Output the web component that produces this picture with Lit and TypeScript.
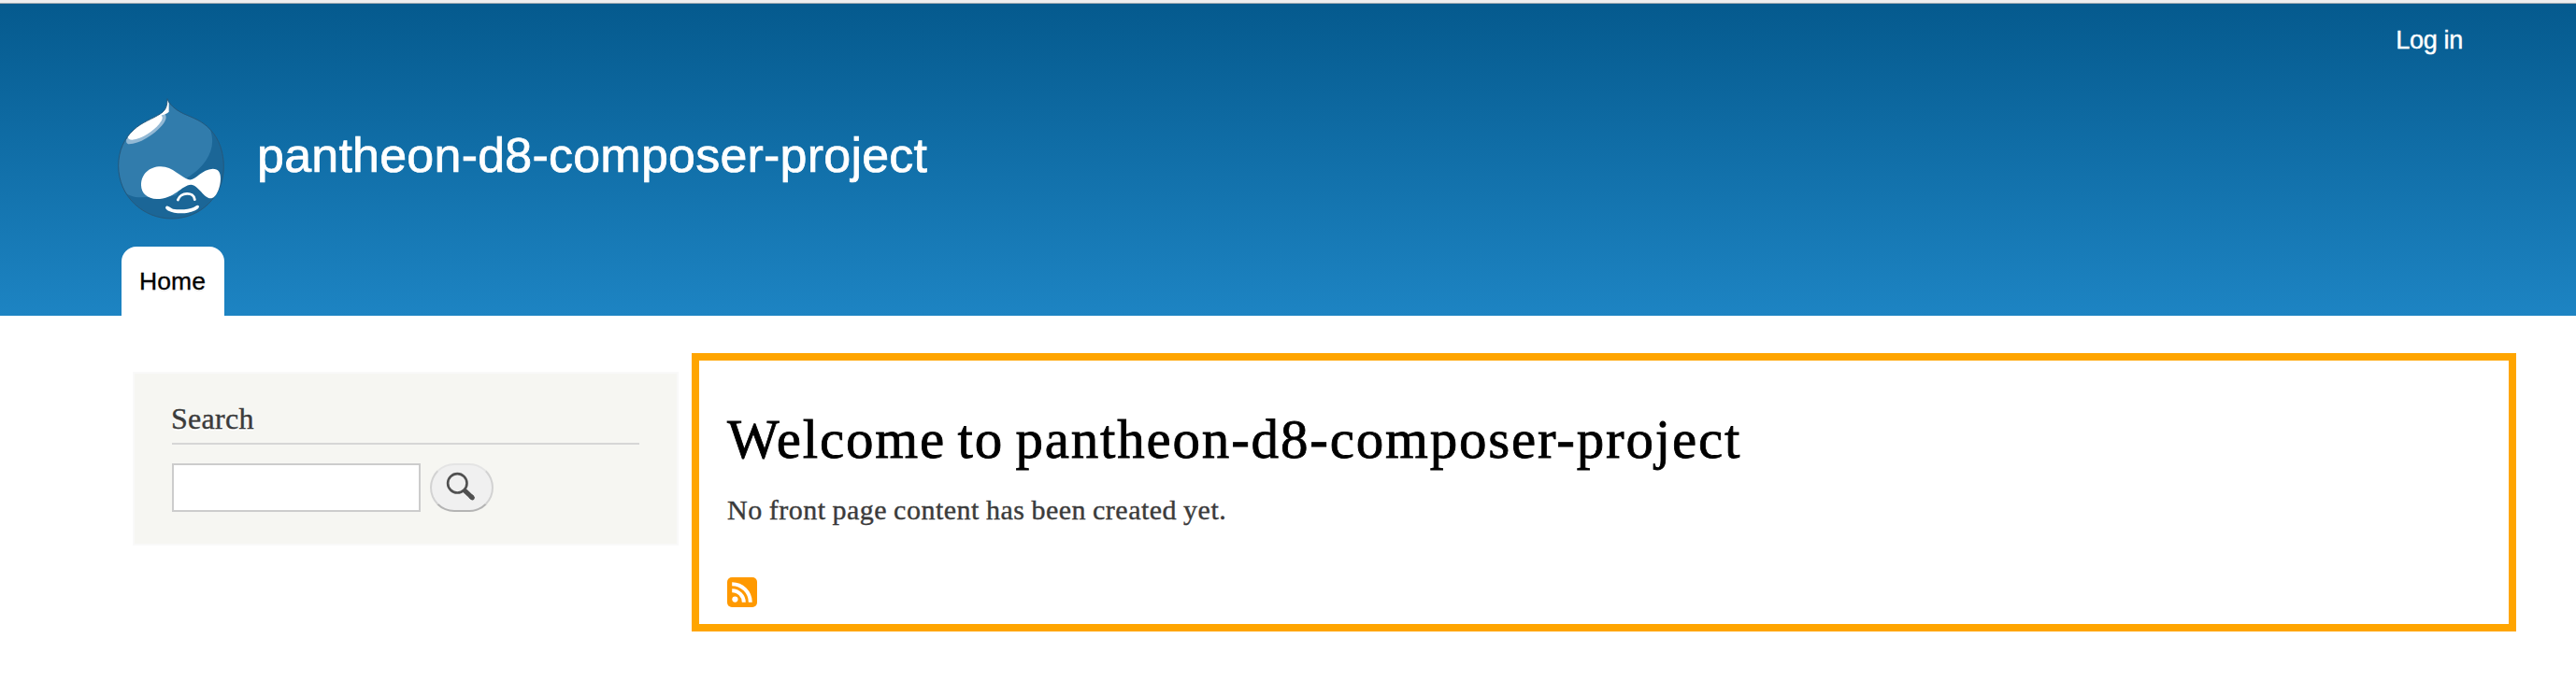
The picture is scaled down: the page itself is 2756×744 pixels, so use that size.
import { LitElement, html, css } from "lit";
import { customElement } from "lit/decorators.js";

@customElement("site-logo")
class SiteLogo extends LitElement {
  static styles = css`
    :host { display: block; width: 114px; height: 130px; }
    .drop { display: block; width: 114px; height: 130px; overflow: visible; }
  `;
  render() {
    return html`<svg class="drop" viewBox="48 47 342 390" aria-label="Home">
      <defs>
        <clipPath id="c"><path d="M207 49C213 66 231 84 259 97C290 111 318 119 345 148C374 179 388 222 388 268C388 364 312 434 221 434C128 434 50 362 50 264C50 216 69 176 99 149C127 123 158 115 187 96C203 85 207 70 207 49Z"/></clipPath>
      </defs>
      <g clip-path="url(#c)">
        <rect x="40" y="40" width="360" height="400" fill="#317cac"/>
        <path d="M345 148C357 184 352 216 330 249C314 272 291 291 270 303L235 360L125 366C101 367 84 359 68 349L50 440H400V180Z" fill="#1b6697"/>
        <path d="M199 97C207 107 202 120 190 135C164 166 116 195 84 195C76 195 74 188 76 180L90 160Z" fill="#93b9d5"/>
        <path d="M207 49C203 72 200 88 179 100C140 114 108 134 80 170C79 176 85 181 94 181C126 178 161 153 181 130C190 120 195 109 188 103C195 99 205 99 212 91V62Z" fill="#fff"/>
      </g>
      <path d="M207 49C213 66 231 84 259 97C290 111 318 119 345 148C374 179 388 222 388 268C388 364 312 434 221 434C128 434 50 362 50 264C50 216 69 176 99 149C127 123 158 115 187 96C203 85 207 70 207 49Z" fill="none" stroke="#24587c" stroke-width="3"/>
      <path d="M123 327C123 290 150 267 186 267C225 267 250 302 276 309C297 313 316 276 353 274C371 274 378 286 378 305C378 332 365 369 346 369C325 369 307 327 283 325C252 327 230 371 173 371C144 371 123 353 123 327Z" fill="#fff"/>
      <path d="M241 374C249 349 292 346 295 373" fill="none" stroke="#fff" stroke-width="8.5" stroke-linecap="round"/>
      <path d="M204 394C211 391 216 400 225 403C248 407 275 405 291 398C299 394 304 388 309 394C310 405 287 412 273 415C252 419 224 416 211 409C203 405 198 398 204 394Z" fill="#fff"/>
    </svg>`;
  }
}

@customElement("search-block")
class SearchBlock extends LitElement {
  static styles = css`
    :host { display: block; }
    .block {
      box-sizing: border-box; width: 584px; height: 186px; padding: 30px 40px 0;
      border: 2px solid #f9f9f9; background: #f6f6f2;
    }
    .title {
      box-sizing: border-box; margin: 0; height: 46px; border-bottom: 2px solid #d6d6d6;
      font: 400 32px/36px "Liberation Serif", serif; letter-spacing: 0.3px; color: #3b3b3b;
      text-indent: -1px; -webkit-text-stroke: 0.4px #3b3b3b; text-shadow: 0 2px 0 #fff;
    }
    .form { display: flex; gap: 10px; margin-top: 20px; }
    .field {
      box-sizing: border-box; width: 266px; height: 52px; margin: 0; padding: 4px;
      border: 2px solid #ccc; border-radius: 0; background: #fff; outline: none;
    }
    .go {
      box-sizing: border-box; width: 68px; height: 52px; margin: 0; padding: 0;
      display: flex; border: 2px solid #d2d2d2; border-top-color: #e4e4e4;
      border-bottom-color: #b4b4b4; border-radius: 26px; background: #f0f0f0;
    }
    .glass { display: block; width: 64px; height: 48px; }
  `;
  render() {
    return html`<section class="block">
      <h2 class="title">Search</h2>
      <div class="form">
        <input class="field" type="text" aria-label="Search" />
        <button class="go" aria-label="Search">
          <svg class="glass" viewBox="462 498 64 48">
            <circle cx="489.3" cy="517.3" r="10.2" fill="none" stroke="#505050" stroke-width="2.6"/>
            <path d="M496.6 524.6L505.3 532.8" stroke="#505050" stroke-width="5"/>
            <path d="M504 531.6L505.4 532.9" stroke="#505050" stroke-width="5" stroke-linecap="round"/>
          </svg>
        </button>
      </div>
    </section>`;
  }
}

@customElement("app-root")
class AppRoot extends LitElement {
  static styles = css`
    :host { display: block; width: 2756px; height: 744px; background: #fff; overflow: hidden; }
    .edge { box-sizing: border-box; height: 4px; background: #eee; border-bottom: 1px solid #a5adb3; }
    .header {
      box-sizing: border-box; height: 334px; display: flex; flex-direction: column;
      padding-left: 126px; background: linear-gradient(to bottom, #055a8e 0%, #1d84c3 100%);
      font-family: "Liberation Sans", Arial, sans-serif; color: #fff;
    }
    .account { display: flex; justify-content: flex-end; padding: 23px 121px 0 0; height: 78px; }
    .login { font-size: 27px; line-height: 32px; letter-spacing: -0.3px; color: #fff; -webkit-text-stroke: 0.4px #fff; }
    .brand { display: flex; gap: 35px; height: 130px; }
    .name { font-size: 52px; line-height: 60px; letter-spacing: 0.22px; padding-top: 31px; white-space: nowrap; -webkit-text-stroke: 0.7px #fff; }
    .tabs { display: flex; margin-top: auto; padding-left: 4px; }
    .tab {
      box-sizing: border-box; width: 110px; height: 74px; padding: 22px 0 0 19px;
      border-radius: 16px 16px 0 0; background: #fff; color: #000;
      font-size: 26.5px; line-height: 30px; letter-spacing: 0.1px;
      -webkit-text-stroke: 0.3px #000; text-shadow: 0 2px 1px #eee;
    }
    .main { display: flex; align-items: flex-start; padding: 40px 64px 0 142px; gap: 14px; }
    .side { margin-top: 20px; }
    .content {
      box-sizing: border-box; flex: 1; height: 298px; border: 8px solid #ffa500;
      padding: 50px 30px 0; font-family: "Liberation Serif", serif;
    }
    .welcome {
      margin: 0; font-size: 59px; font-weight: 400; line-height: 68px; letter-spacing: 1.8px;
      word-spacing: -4px; color: #000; white-space: nowrap; -webkit-text-stroke: 0.8px #000;
    }
    .note {
      margin: 25px 0 0; font-size: 30px; line-height: 34px; letter-spacing: 0.5px;
      word-spacing: -1px; color: #3b3b3b; -webkit-text-stroke: 0.4px #3b3b3b;
    }
    .feed { display: block; width: 32px; height: 32px; margin-top: 55px; }
  `;
  render() {
    return html`
      <div class="edge"></div>
      <header class="header">
        <nav class="account"><a class="login">Log in</a></nav>
        <div class="brand">
          <site-logo></site-logo>
          <div class="name">pantheon-d8-composer-project</div>
        </div>
        <nav class="tabs"><a class="tab">Home</a></nav>
      </header>
      <div class="main">
        <aside class="side"><search-block></search-block></aside>
        <main class="content">
          <h1 class="welcome">Welcome to pantheon-d8-composer-project</h1>
          <p class="note">No front page content has been created yet.</p>
          <svg class="feed" viewBox="0 0 32 32">
            <rect width="32" height="32" rx="5" fill="#ff9900"/>
            <circle cx="8.4" cy="23.6" r="3.1" fill="#fff"/>
            <path d="M5.2 14.2A12.6 12.6 0 0 1 17.8 26.8M5.2 7.2A19.6 19.6 0 0 1 24.8 26.8" fill="none" stroke="#fff" stroke-width="4"/>
          </svg>
        </main>
      </div>
    `;
  }
}
